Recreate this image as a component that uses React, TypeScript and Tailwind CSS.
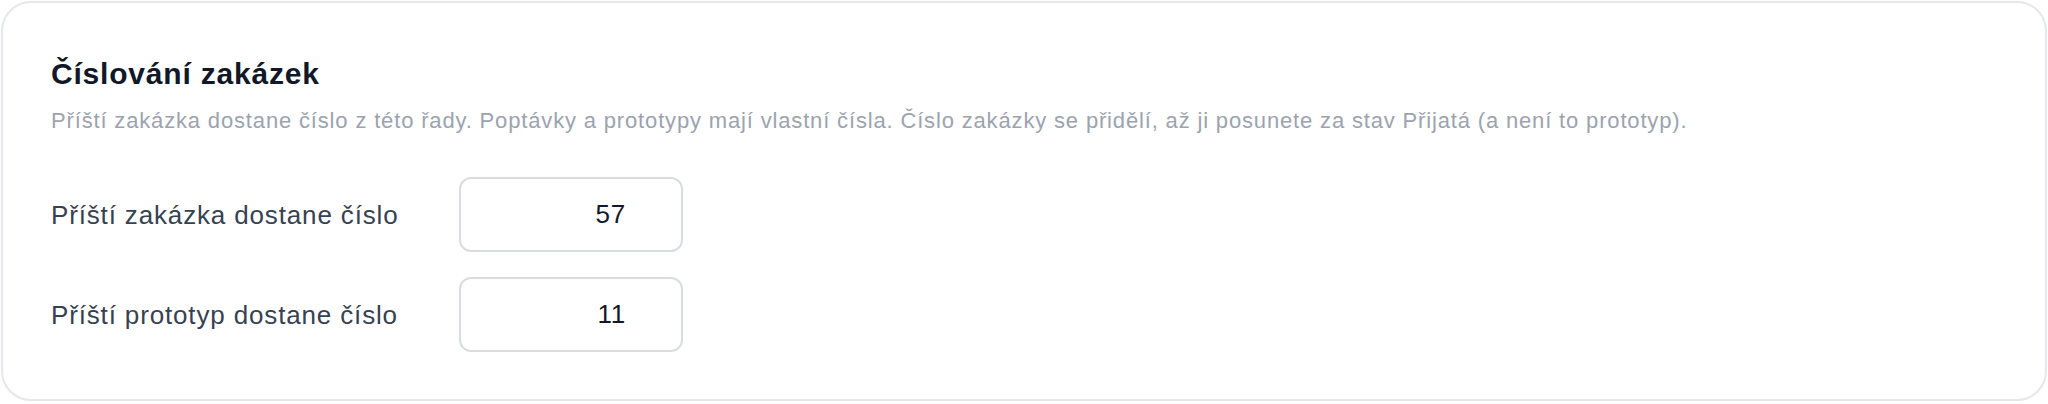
import { useState } from "react";

type CounterField = {
  id: string;
  label: string;
  value: string;
};

const initialFields: CounterField[] = [
  { id: "order", label: "Příští zakázka dostane číslo", value: "57" },
  { id: "prototype", label: "Příští prototyp dostane číslo", value: "11" },
];

function CounterRow({
  field,
  onChange,
}: {
  field: CounterField;
  onChange: (value: string) => void;
}) {
  return (
    <div className="flex items-center gap-6">
      <label
        htmlFor={field.id}
        className="w-[384px] shrink-0 text-[26px] leading-[36px] tracking-[0.85px] text-[#374151]"
      >
        {field.label}
      </label>
      <input
        id={field.id}
        type="text"
        inputMode="numeric"
        value={field.value}
        onChange={(e) => onChange(e.target.value.replace(/\D/g, ""))}
        className="h-[75px] w-[224px] rounded-[12px] border-2 border-[#d9dce1] bg-white pr-[55px] text-right text-[26px] tracking-[0.8px] text-[#111827] outline-none focus:border-[#9ca3af]"
      />
    </div>
  );
}

export default function App() {
  const [fields, setFields] = useState(initialFields);

  const update = (id: string, value: string) =>
    setFields((prev) => prev.map((f) => (f.id === id ? { ...f, value } : f)));

  return (
    <div className="min-h-screen bg-white p-px font-['Liberation_Sans',Arial,sans-serif]">
      <section className="rounded-[30px] border-2 border-[#e5e7eb] bg-white px-[48px] pb-[47px] pt-[48px]">
        <h2 className="text-[30px] font-bold leading-[45px] tracking-[0.8px] text-[#111827]">Číslování zakázek</h2>
        <p className="mt-[9px] text-[22px] leading-[31px] tracking-[0.84px] text-[#9ca3af]">
          Příští zakázka dostane číslo z této řady. Poptávky a prototypy mají vlastní čísla. Číslo zakázky se
          přidělí, až ji posunete za stav Přijatá (a není to prototyp).
        </p>
        <div className="mt-[41px] flex flex-col gap-[25px]">
          {fields.map((field) => (
            <CounterRow key={field.id} field={field} onChange={(v) => update(field.id, v)} />
          ))}
        </div>
      </section>
    </div>
  );
}
